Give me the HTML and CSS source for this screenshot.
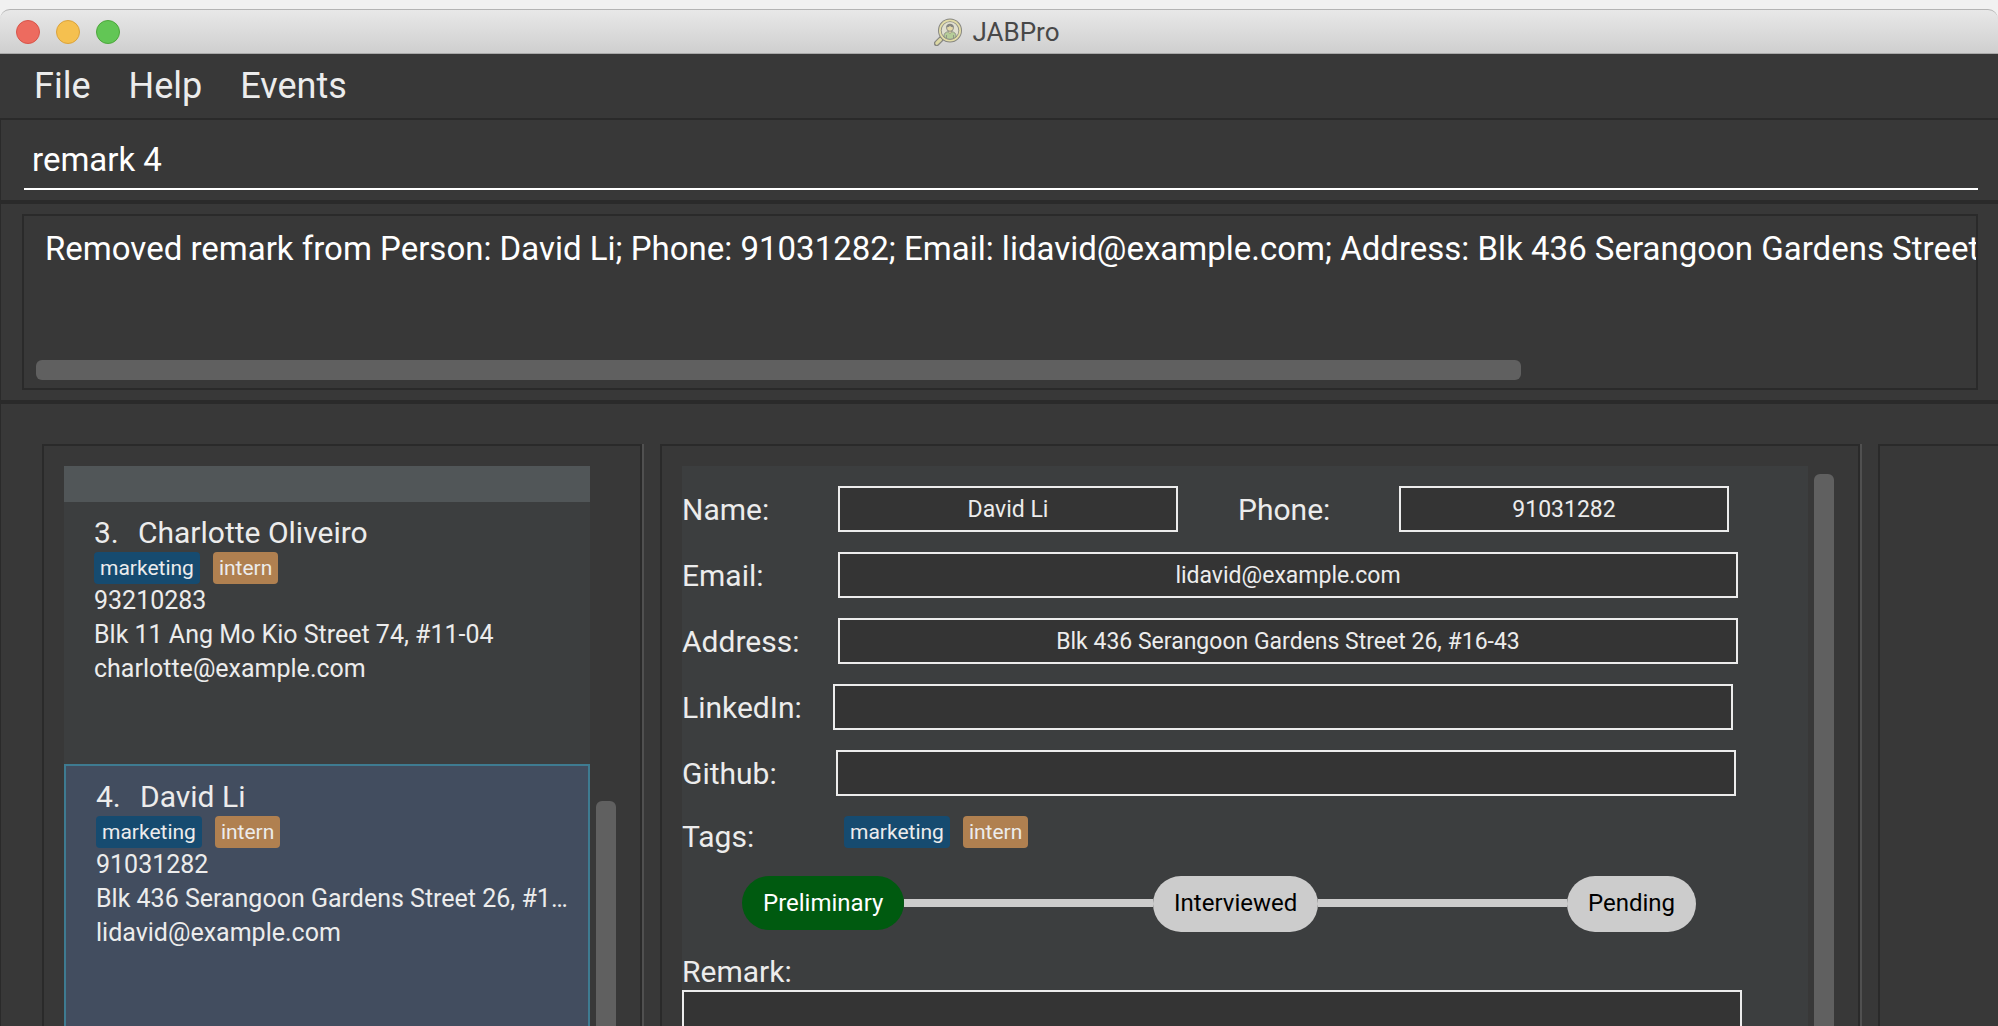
FILE: index.html
```html
<!DOCTYPE html>
<html lang="en">
<head>
<meta charset="utf-8">
<meta name="viewport" content="width=device-width, initial-scale=1">
<title>JABPro</title>
<link rel="stylesheet" href="styles.css">
</head>
<body>
<div class="window">
  <header class="titlebar">
    <div class="lights">
      <button class="light light-close" type="button" aria-label="Close"></button>
      <button class="light light-minimise" type="button" aria-label="Minimise"></button>
      <button class="light light-zoom" type="button" aria-label="Zoom"></button>
    </div>
    <h1 class="title">
      <svg class="logo" viewBox="0 0 28 28" aria-hidden="true">
        <path d="M9 19 2.600 25.400" stroke="#868680" stroke-width="5.600" stroke-linecap="round"/>
        <path d="M6.500 21.500 2.800 25.200" stroke="#dcd8a4" stroke-width="3.200" stroke-linecap="round"/>
        <circle cx="16" cy="12.500" r="12" fill="#868680"/>
        <circle cx="16" cy="12.500" r="11" fill="#e2dca6"/>
        <circle cx="16" cy="12.500" r="9.200" fill="#868680"/>
        <circle cx="16" cy="12.500" r="8.400" fill="#e0dfcf"/>
        <path d="M10 19v-1.200c0-2.400 1.600-3.600 3.800-4.100h4.400c2.200.5 3.800 1.700 3.800 4.100V19a9 9 0 0 1-12 0z" fill="#b5cc98" stroke="#868680" stroke-width=".8"/>
        <path d="M12.500 20v-3M19.500 20v-3" stroke="#868680" stroke-width=".8"/>
        <path d="M14.400 12v2.200l1.600 1.400 1.600-1.400V12z" fill="#e3d9a8" stroke="#868680" stroke-width=".6"/>
        <circle cx="16" cy="9.800" r="3.500" fill="#e3d9a8" stroke="#868680" stroke-width=".9"/>
        <path d="M12.300 9.600c-.3-5 7.700-5 7.400 0-1.700-.2-3-.8-3.700-1.800-.8 1.100-2 1.600-3.700 1.800z" fill="#868680"/>
      </svg>
      JABPro
    </h1>
  </header>

  <nav class="menubar" aria-label="Main menu">
    <button class="menu" type="button">File</button>
    <button class="menu" type="button">Help</button>
    <button class="menu" type="button">Events</button>
  </nav>

  <section class="command-pane">
    <input class="command" type="text" aria-label="Command" value="remark 4">
  </section>

  <section class="result-pane">
    <div class="result-box">
      <textarea class="result" wrap="off" rows="1" readonly aria-label="Result">Removed remark from Person: David Li; Phone: 91031282; Email: lidavid@example.com; Address: Blk 436 Serangoon Gardens Street</textarea>
      <div class="result-track"><div class="result-thumb"></div></div>
    </div>
  </section>

  <main class="panes">
    <section class="pane list-pane">
      <ul class="people">
        <li class="person-stub"></li>
        <li class="person">
          <h2 class="person-name"><span class="person-id">3.</span>Charlotte Oliveiro</h2>
          <div class="tags"><span class="tag tag-blue">marketing</span><span class="tag tag-orange">intern</span></div>
          <p class="person-line">93210283</p>
          <p class="person-line">Blk 11 Ang Mo Kio Street 74, #11-04</p>
          <p class="person-line">charlotte@example.com</p>
        </li>
        <li class="person person-selected">
          <h2 class="person-name"><span class="person-id">4.</span>David Li</h2>
          <div class="tags"><span class="tag tag-blue">marketing</span><span class="tag tag-orange">intern</span></div>
          <p class="person-line">91031282</p>
          <p class="person-line">Blk 436 Serangoon Gardens Street 26, #16-43</p>
          <p class="person-line">lidavid@example.com</p>
        </li>
      </ul>
      <div class="scroll list-scroll"></div>
    </section>

    <section class="pane detail-pane">
      <form class="detail">
        <div class="row">
          <label class="label" for="name">Name:</label>
          <input class="field field-name" id="name" type="text" value="David Li" readonly>
          <label class="label label-phone" for="phone">Phone:</label>
          <input class="field field-phone" id="phone" type="text" value="91031282" readonly>
        </div>
        <div class="row">
          <label class="label" for="email">Email:</label>
          <input class="field" id="email" type="text" value="lidavid@example.com" readonly>
        </div>
        <div class="row">
          <label class="label" for="address">Address:</label>
          <input class="field" id="address" type="text" value="Blk 436 Serangoon Gardens Street 26, #16-43" readonly>
        </div>
        <div class="row">
          <label class="label label-linkedin" for="linkedin">LinkedIn:</label>
          <input class="field" id="linkedin" type="text" readonly>
        </div>
        <div class="row">
          <label class="label label-github" for="github">Github:</label>
          <input class="field" id="github" type="text" readonly>
        </div>
        <div class="row row-tags">
          <span class="label label-tags">Tags:</span>
          <div class="tags"><span class="tag tag-blue">marketing</span><span class="tag tag-orange">intern</span></div>
        </div>
        <div class="progress">
          <span class="step step-done">Preliminary</span>
          <span class="link"></span>
          <span class="step">Interviewed</span>
          <span class="link"></span>
          <span class="step">Pending</span>
        </div>
        <div class="remark">
          <label class="label" for="remark">Remark:</label>
          <textarea class="remark-box" id="remark" readonly></textarea>
        </div>
      </form>
      <div class="scroll detail-scroll"></div>
    </section>

    <section class="pane extra-pane"></section>
  </main>
</div>
</body>
</html>
```
FILE: styles.css
```css
* {
  box-sizing: border-box;
}

body {
  margin: 0;
  background: #f1f1f1;
  color: #ececec;
  font-family: Roboto, "Liberation Sans", sans-serif;
}

h1, h2, p, ul {
  margin: 0;
  padding: 0;
  font-weight: 400;
}

button, input, textarea {
  margin: 0;
  padding: 0;
  border: 0;
  border-radius: 0;
  outline: 0;
  background: none;
  color: inherit;
  font: inherit;
}

.window {
  display: flex;
  flex-direction: column;
  height: 100vh;
  padding-top: 9px;
  overflow: hidden;
}

/* Title bar */
.titlebar {
  display: grid;
  grid-template-columns: 1fr auto 1fr;
  align-items: center;
  flex: none;
  height: 45px;
  padding: 0 16px;
  border-top: 1px solid #b4b4b4;
  border-bottom: 1px solid #a9a9a9;
  border-radius: 10px 10px 0 0;
  background: linear-gradient(#e8e8e8, #cfcfcf);
}

.lights {
  display: flex;
  gap: 16px;
}

.light {
  width: 24px;
  height: 24px;
  border: 1px solid;
  border-radius: 50%;
}

.light-close {
  border-color: #d8554a;
  background: #ed6b5f;
}

.light-minimise {
  border-color: #dba33c;
  background: #f5c04f;
}

.light-zoom {
  border-color: #4da73c;
  background: #62c655;
}

.title {
  display: flex;
  align-items: center;
  gap: 10px;
  padding-right: 4px;
  color: #484848;
  font-size: 26px;
  line-height: 32px;
}

.logo {
  width: 28px;
  height: 28px;
  fill: none;
}

/* Menu bar */
.menubar {
  display: flex;
  flex: none;
  gap: 38px;
  height: 64px;
  padding: 0 34px;
  background: #383838;
}

.menu {
  font-size: 36px;
  line-height: 64px;
}

/* Command and result */
.command-pane {
  flex: none;
  padding: 10px 20px 10px 23px;
  border: solid #2a2a2a;
  border-width: 2px 0 2px 1px;
  background: #383838;
}

.command {
  display: block;
  width: 100%;
  height: 60px;
  padding-left: 8px;
  border-bottom: 2px solid #fff;
  color: #fff;
  font-size: 33px;
}

.result-pane {
  flex: none;
  padding: 10px 20px 10px 21px;
  border: solid #2a2a2a;
  border-width: 2px 0 2px 1px;
  background: #383838;
}

.result-box {
  padding: 14px 0 8px;
  border: 2px solid #2a2a2a;
}

.result {
  display: block;
  width: 100%;
  height: 130px;
  padding-left: 21px;
  overflow: hidden;
  resize: none;
  color: #fff;
  font-size: 33px;
  line-height: 38px;
}

.result-track {
  padding: 0 12px;
}

.result-thumb {
  width: 77%;
  height: 20px;
  border-radius: 6px;
  background: #606060;
}

/* Split panes */
.panes {
  display: grid;
  grid-template-columns: 602fr 1202fr 120fr;
  grid-template-rows: minmax(0, 1fr);
  gap: 16px;
  flex: 1;
  min-height: 0;
  padding: 40px 0 0 41px;
  border: solid #2a2a2a;
  border-width: 2px 0 0 1px;
  background: #383838;
}

.pane {
  display: flex;
  gap: 6px;
  min-width: 0;
  padding: 20px 24px 0 20px;
  border: solid #2a2a2a;
  border-width: 2px 2px 0;
}

.list-pane,
.detail-pane {
  margin-right: 2px;
  box-shadow: 2px 0 0 #505050;
}

.extra-pane {
  border-right: 0;
}

.scroll {
  flex: none;
  width: 20px;
  border-radius: 6px 6px 0 0;
  background: #606060;
}

.list-scroll {
  margin-top: 335px;
}

.detail-scroll {
  margin-top: 8px;
}

/* Person list */
.people {
  display: flex;
  flex: 1;
  flex-direction: column;
  min-width: 0;
  list-style: none;
}

.person-stub {
  flex: none;
  height: 36px;
  background: #515658;
}

.person {
  flex: none;
  height: 262px;
  padding: 12px 18px 0 30px;
  background: #3c3e3f;
}

.person-selected {
  flex: 1;
  border: solid #3e7b91;
  border-width: 2px 2px 0;
  background: #424d5f;
}

.person-name {
  display: flex;
  font-size: 30px;
  line-height: 38px;
}

.person-id {
  width: 44px;
}

.person-line {
  overflow: hidden;
  font-size: 25px;
  line-height: 34px;
  text-overflow: ellipsis;
  white-space: nowrap;
}

.tags {
  display: flex;
  gap: 13px;
}

.tag {
  padding: 0 6px;
  border-radius: 4px;
  font-size: 21px;
  line-height: 32px;
}

.tag-blue {
  background: #164b70;
}

.tag-orange {
  background: #b08050;
}

/* Person details */
.detail {
  display: flex;
  flex: 1;
  flex-direction: column;
  gap: 20px;
  min-width: 0;
  padding-top: 20px;
  background: #3c3e3f;
}

.row {
  display: flex;
  flex: none;
  align-items: center;
}

.label {
  flex: none;
  width: 156px;
  padding-top: 2px;
  font-size: 30px;
  line-height: 36px;
}

.label-linkedin {
  width: 151px;
}

.label-github {
  width: 154px;
}

.label-tags {
  width: 162px;
}

.label-phone {
  width: 221px;
  padding-left: 60px;
}

.field {
  flex: 0 1 900px;
  min-width: 0;
  height: 46px;
  border: 2px solid #ececec;
  background: #343434;
  font-size: 23px;
  text-align: center;
}

.field-name {
  flex-basis: 340px;
}

.field-phone {
  flex-basis: 330px;
}

.row-tags {
  height: 40px;
}

.row-tags .tags {
  align-self: flex-start;
}

.progress {
  display: flex;
  flex: none;
  align-items: flex-start;
  max-width: 1014px;
  padding-left: 60px;
}

.step {
  padding: 0 21px 2px;
  border-radius: 28px;
  background: #ccc;
  color: #000;
  font-size: 24px;
  line-height: 54px;
}

.step-done {
  padding-bottom: 0;
  background: #005a10;
  color: #fff;
}

.link {
  flex: 1;
  height: 8px;
  margin-top: 23px;
  background: #ccc;
}

.remark {
  display: flex;
  flex: 1;
  flex-direction: column;
  min-height: 0;
}

.remark-box {
  flex: 1;
  width: 1060px;
  min-height: 0;
  max-width: 100%;
  border: solid #ececec;
  border-width: 2px 2px 0;
  background: #343434;
  font-size: 23px;
  resize: none;
}
```
